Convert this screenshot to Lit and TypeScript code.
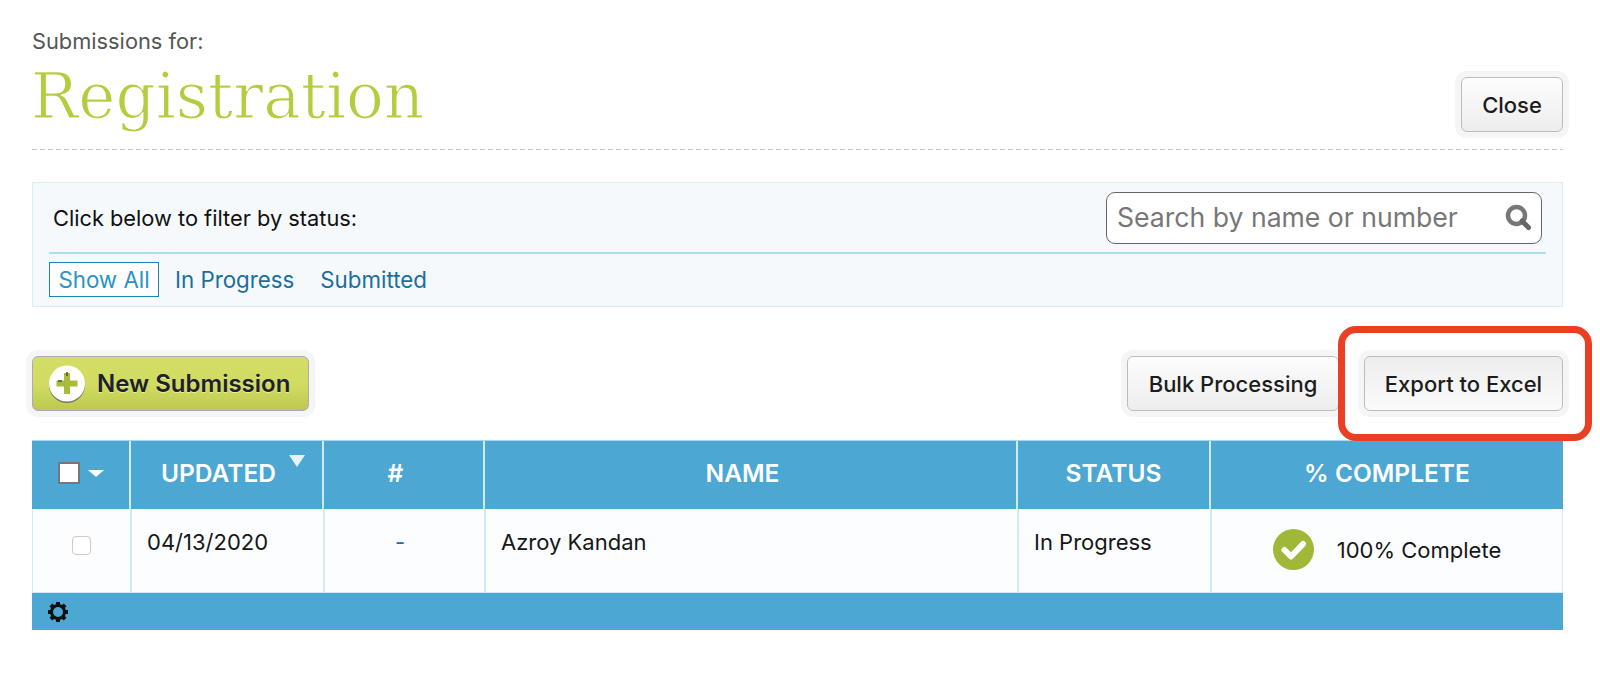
import { LitElement, html, css, svg } from "lit";
import { customElement } from "lit/decorators.js";

const gearTeeth = [0, 45, 90, 135, 180, 225, 270, 315];

@customElement("app-root")
export class AppRoot extends LitElement {
  static styles = css`
    :host {
      display: block;
      position: relative;
      width: 1600px;
      height: 675px;
      box-sizing: border-box;
      padding: 0 37px 0 32px;
      background: #fff;
      font-family: Inter, Lato, sans-serif;
      color: #111;
      overflow: hidden;
    }
    .header {
      display: flex;
      justify-content: space-between;
      align-items: flex-end;
      height: 150px;
      box-sizing: border-box;
      padding-bottom: 17px;
      background: repeating-linear-gradient(90deg, #c9c9c9 0 5px, transparent 5px 8px) left bottom / 100% 1px no-repeat;
    }
    .label {
      font-size: 21.8px;
      line-height: 24px;
      color: #555;
      margin-bottom: 7px;
    }
    .title {
      font-family: "DejaVu Serif", serif;
      font-size: 62.8px;
      color: #b4cd3f;
      margin: 0 0 0 -1px;
      font-weight: 400;
      -webkit-text-stroke: 1.2px #fff;
    }
    .btn {
      display: flex;
      align-items: center;
      justify-content: center;
      box-sizing: border-box;
      height: 55px;
      border: 1px solid #bcbcbc;
      border-radius: 6px;
      background: linear-gradient(#fdfdfd, #ededed);
      box-shadow: 0 0 0 6px #f5f5f5;
      font-size: 22px;
      font-weight: 500;
      color: #1c1c1c;
    }
    .close {
      width: 102px;
      margin-bottom: 1px;
    }
    .filter {
      margin-top: 32px;
      height: 125px;
      box-sizing: border-box;
      background: #f5f9fc;
      border: 1px solid #d8edf6;
      padding: 9px 16px 0;
    }
    .filter-top {
      display: flex;
      justify-content: space-between;
      align-items: center;
      height: 52px;
      padding: 0 4px 8px;
      font-size: 21.8px;
      border-bottom: 2px solid #aedcf0;
    }
    .search {
      display: flex;
      align-items: center;
      justify-content: space-between;
      width: 436px;
      height: 52px;
      box-sizing: border-box;
      border: 1px solid #666;
      border-radius: 9px;
      background: #fff;
      padding: 0 9px 2px 10px;
      color: #777;
      font-size: 26.6px;
    }
    .tabs {
      display: flex;
      align-items: center;
      gap: 16px;
      margin-top: 8px;
      font-size: 22.3px;
      color: #1a6f9c;
    }
    .tab {
      height: 35px;
      display: flex;
      align-items: center;
    }
    .tab:last-child {
      margin-left: 10px;
    }
    .tab.active {
      box-sizing: border-box;
      width: 110px;
      justify-content: center;
      border: 1px solid #1b87b8;
      background: #fff;
      color: #2a93c4;
    }
    .actions {
      display: flex;
      justify-content: space-between;
      margin-top: 49px;
    }
    .actions-right {
      display: flex;
      gap: 25px;
    }
    .new {
      width: 277px;
      justify-content: flex-start;
      gap: 11px;
      padding-left: 15px;
      background: linear-gradient(#d4de66, #d0db60 55%, #bcc84f);
      border-color: #aab;
      color: #20202c;
      font-size: 24px;
      font-weight: 600;
      text-shadow: 0 1px 0 #e8efa0;
    }
    .bulk {
      width: 212px;
    }
    .export {
      width: 199px;
      background: linear-gradient(#ededed, #fbfbfb);
    }
    .table {
      margin-top: 29px;
      width: 1531px;
    }
    .row {
      display: grid;
      grid-template-columns: 97px 193px 161px 533px 193px 354px;
    }
    .head {
      height: 69px;
      background: #4ca7d2;
      border-top: 1px solid #a9d8ee;
      box-sizing: border-box;
    }
    .th {
      display: flex;
      align-items: center;
      justify-content: center;
      padding-bottom: 4px;
      color: #fff;
      font-size: 24.5px;
      font-weight: 600;
      border-left: 2px solid #cfe9f5;
      position: relative;
    }
    .th:first-child {
      border-left: 0;
      gap: 8px;
    }
    .th.shifted {
      padding-right: 16px;
    }
    .check-all {
      width: 22px;
      height: 22px;
      box-sizing: border-box;
      background: #fff;
      border: 2px solid #777;
    }
    .caret {
      width: 0;
      height: 0;
      border-left: 8px solid transparent;
      border-right: 8px solid transparent;
      border-top: 7px solid #fff;
    }
    .sort {
      position: absolute;
      top: 14px;
      right: 17px;
      width: 0;
      height: 0;
      border-left: 8px solid transparent;
      border-right: 8px solid transparent;
      border-top: 12px solid #e6f3f9;
    }
    .body {
      height: 84px;
      background: #fcfdfe;
      border-left: 1px solid #cfe9f5;
      border-right: 1px solid #cfe9f5;
      border-bottom: 1px solid #cfe9f5;
      box-sizing: border-box;
    }
    .td {
      font-size: 22px;
      border-left: 2px solid #d3ebf6;
      padding: 19px 15px 0;
      box-sizing: border-box;
      line-height: 28px;
      color: #161616;
    }
    .td:first-child {
      border-left: 0;
      padding: 27px 0 0;
      display: flex;
      justify-content: center;
    }
    .row-check {
      width: 19px;
      height: 19px;
      box-sizing: border-box;
      border: 1px solid #ccc;
      border-radius: 4px;
      background: #fff;
    }
    .number {
      text-align: center;
      padding-right: 24px;
      color: #1a6f9c;
    }
    .complete {
      display: flex;
      align-items: center;
      justify-content: center;
      gap: 23px;
      padding: 0 17px 2px 15px;
    }
    .foot {
      display: flex;
      align-items: center;
      height: 37px;
      background: #4ca7d2;
      padding-left: 16px;
      box-sizing: border-box;
    }
    .callout {
      position: absolute;
      left: 1338px;
      top: 326px;
      width: 254px;
      height: 115px;
      box-sizing: border-box;
      border: 7px solid #ea3f23;
      border-radius: 18px;
      pointer-events: none;
    }
  `;

  render() {
    return html`
      <div class="header">
        <div>
          <div class="label">Submissions for:</div>
          <h1 class="title">Registration</h1>
        </div>
        <div class="btn close">Close</div>
      </div>

      <div class="filter">
        <div class="filter-top">
          <span>Click below to filter by status:</span>
          <div class="search">
            <span>Search by name or number</span>
            <svg width="28" height="28" viewBox="0 0 28 28">
              <circle cx="12.5" cy="12.5" r="8.5" fill="none" stroke="#777" stroke-width="4.5" />
              <path d="M18 18 L24.5 24.5" stroke="#666" stroke-width="5" stroke-linecap="round" />
            </svg>
          </div>
        </div>
        <div class="tabs">
          <div class="tab active">Show All</div>
          <div class="tab">In Progress</div>
          <div class="tab">Submitted</div>
        </div>
      </div>

      <div class="actions">
        <div class="btn new">
          <svg width="38" height="38" viewBox="0 0 38 38">
            <circle cx="19" cy="20" r="18" fill="#77786a" />
            <circle cx="19" cy="18.5" r="18" fill="#fff" />
            <path d="M19 8 V29 M8.5 18.5 H29.5" stroke="#a9bb3c" stroke-width="6" />
            <path d="M19 7 V11 M10 16 H14" stroke="#4d5526" stroke-width="1.5" />
          </svg>
          <span>New Submission</span>
        </div>
        <div class="actions-right">
          <div class="btn bulk">Bulk Processing</div>
          <div class="btn export">Export to Excel</div>
        </div>
      </div>

      <div class="table">
        <div class="row head">
          <div class="th"><span class="check-all"></span><span class="caret"></span></div>
          <div class="th shifted">UPDATED<span class="sort"></span></div>
          <div class="th shifted">#</div>
          <div class="th shifted">NAME</div>
          <div class="th">STATUS</div>
          <div class="th">% COMPLETE</div>
        </div>
        <div class="row body">
          <div class="td"><span class="row-check"></span></div>
          <div class="td">04/13/2020</div>
          <div class="td number">-</div>
          <div class="td">Azroy Kandan</div>
          <div class="td">In Progress</div>
          <div class="td complete">
            <svg width="41" height="41" viewBox="0 0 41 41">
              <circle cx="20.5" cy="20.5" r="20.5" fill="#9fb837" />
              <path d="M11.5 21 L18 27.5 L30 15" fill="none" stroke="#fff" stroke-width="6" stroke-linecap="round" stroke-linejoin="round" />
            </svg>
            <span>100% Complete</span>
          </div>
        </div>
        <div class="foot">
          <svg width="20" height="20" viewBox="0 0 20 20">
            <circle cx="10" cy="10" r="6.5" fill="none" stroke="#111" stroke-width="3" />
            ${gearTeeth.map(
              (deg) => svg`<rect x="8" y="0" width="4" height="4" fill="#111" transform="rotate(${deg} 10 10)" />`
            )}
          </svg>
        </div>
      </div>

      <div class="callout"></div>
    `;
  }
}
